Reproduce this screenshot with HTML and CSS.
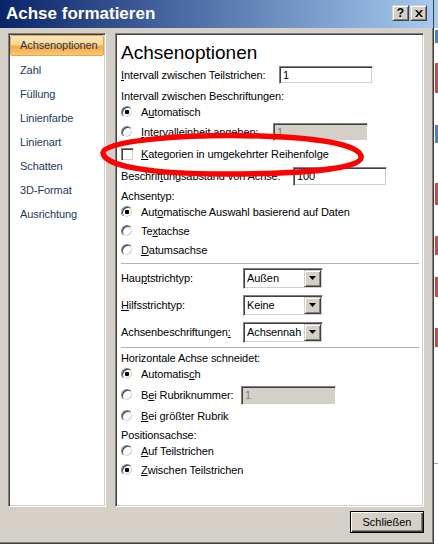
FILE: index.html
```html
<!DOCTYPE html>
<html lang="de">
<head>
<meta charset="utf-8">
<title>Achse formatieren</title>
<link rel="stylesheet" href="styles.css">
</head>
<body>
<div class="screen">
  <div class="dialog">
    <div class="titlebar">
      <span class="title">Achse formatieren</span>
      <div class="caption-btns">
        <span class="cbtn">?</span>
        <span class="cbtn"><svg width="8" height="7" viewBox="0 0 8 7"><path d="M0 0h2l2 2.4L6 0h2L5 3.5L8 7H6L4 4.6L2 7H0l3-3.5z" fill="#000"/></svg></span>
      </div>
    </div>
    <div class="main">
      <ul class="nav sunken">
        <li class="nav-item selected"><span class="nav-hl">Achsenoptionen</span></li>
        <li class="nav-item">Zahl</li>
        <li class="nav-item">Füllung</li>
        <li class="nav-item">Linienfarbe</li>
        <li class="nav-item">Linienart</li>
        <li class="nav-item">Schatten</li>
        <li class="nav-item">3D-Format</li>
        <li class="nav-item">Ausrichtung</li>
      </ul>
      <div class="panel sunken">
        <h1 class="heading">Achsenoptionen</h1>

        <div class="row m3"><span class="lbl w158"><u>I</u>ntervall zwischen Teilstrichen:</span><span class="field f94 h18 sunken">1</span></div>
        <div class="row m5"><span>Intervall zwischen Beschriftungen:</span></div>
        <div class="row m0"><span class="radio on"></span><span>A<u>u</u>tomatisch</span></div>
        <div class="row m4"><span class="radio"></span><span class="lbl w132"><u>I</u>ntervalleinheit angeben:</span><span class="field f95 h18 sunken disabled">1</span></div>
        <div class="row m6"><span class="check sunken"></span><span><u>K</u>ategorien in umgekehrter Reihenfolge</span></div>
        <div class="row m6"><span class="lbl w172">Beschrif<u>t</u>ungsabstand von Achse:</span><span class="field f94 h19 sunken">100</span></div>
        <div class="row m4"><span>Achsentyp:</span></div>
        <div class="row m0"><span class="radio on"></span><span>Aut<u>o</u>matische Auswahl basierend auf Daten</span></div>
        <div class="row m3"><span class="radio"></span><span>Te<u>x</u>tachse</span></div>
        <div class="row m3"><span class="radio"></span><span><u>D</u>atumsachse</span></div>
        <div class="sep m5"></div>
        <div class="row m6"><span class="lbl w122">Hau<u>p</u>tstrichtyp:</span><span class="select sunken"><span class="select-val">Außen</span><span class="select-btn"><svg width="7" height="4" viewBox="0 0 7 4"><path d="M0 0h7L3.5 4z" fill="#000"/></svg></span></span></div>
        <div class="row m11"><span class="lbl w122"><u>H</u>ilfsstrichtyp:</span><span class="select sunken"><span class="select-val">Keine</span><span class="select-btn"><svg width="7" height="4" viewBox="0 0 7 4"><path d="M0 0h7L3.5 4z" fill="#000"/></svg></span></span></div>
        <div class="row m11"><span class="lbl w122">Achsenbeschriftungen<u>:</u></span><span class="select sunken"><span class="select-val">Achsennah</span><span class="select-btn"><svg width="7" height="4" viewBox="0 0 7 4"><path d="M0 0h7L3.5 4z" fill="#000"/></svg></span></span></div>
        <div class="sep m7"></div>
        <div class="row m2"><span>Horizontale Achse schneidet:</span></div>
        <div class="row m0"><span class="radio on"></span><span>Automatis<u>c</u>h</span></div>
        <div class="row m5"><span class="radio"></span><span class="lbl w100">B<u>e</u>i Rubriknummer:</span><span class="field f95 h19 sunken disabled">1</span></div>
        <div class="row m5"><span class="radio"></span><span><u>B</u>ei größter Rubrik</span></div>
        <div class="row m3"><span>Positionsachse:</span></div>
        <div class="row m0"><span class="radio"></span><span><u>A</u>uf Teilstrichen</span></div>
        <div class="row m3"><span class="radio on"></span><span><u>Z</u>wischen Teilstrichen</span></div>
      </div>
    </div>
    <div class="footer">
      <button class="btn" type="button">Schließen</button>
    </div>
  </div>
  <div class="sheet"></div>
</div>
<svg class="annot" width="438" height="544" viewBox="0 0 438 544">
  <path d="M103 153 C102 140 190 134 260 136 C330 138 363 147 361 158 C359 169 300 174 225 174 C150 174 104 166 103 153 Z" fill="none" stroke="#f00" stroke-width="5.5"/>
</svg>
</body>
</html>
```

FILE: styles.css
```css
* {
  box-sizing: border-box;
  margin: 0;
  padding: 0;
}

body {
  margin: 0;
  width: 438px;
  height: 544px;
  overflow: hidden;
  background: #fff;
  font-family: "Liberation Sans", Arial, sans-serif;
  font-size: 11px;
  letter-spacing: -0.1px;
  color: #000;
}

.screen {
  display: flex;
  width: 438px;
  height: 544px;
}

.dialog {
  width: 434px;
  height: 544px;
  flex: none;
  display: flex;
  flex-direction: column;
  background: #d4d0c8;
  border-right: 1px solid #404040;
  border-bottom: 1px solid #404040;
  box-shadow: inset -1px -1px 0 #808080;
}

.titlebar {
  height: 28px;
  flex: none;
  display: flex;
  align-items: center;
  padding: 0 6px 0 6px;
  background: linear-gradient(to right, #0a246a, #a6caf0);
}

.title {
  color: #fff;
  font-weight: bold;
  font-size: 17px;
  letter-spacing: 0;
  padding-bottom: 1px;
}

.caption-btns {
  margin-left: auto;
  display: flex;
  gap: 1px;
  margin-bottom: 2px;
}

.cbtn {
  width: 17px;
  height: 16px;
  display: flex;
  align-items: center;
  justify-content: center;
  background: #d4d0c8;
  border: 1px solid;
  border-color: #d4d0c8 #404040 #404040 #d4d0c8;
  box-shadow: inset 1px 1px 0 #fff, inset -1px -1px 0 #808080;
  font-weight: bold;
  font-size: 12px;
  line-height: 1;
  letter-spacing: 0;
}

.main {
  display: flex;
  gap: 9px;
  padding: 5px 9px 0 8px;
}

.sunken {
  border: 1px solid;
  border-color: #808080 #fff #fff #808080;
  box-shadow: inset 1px 1px 0 #404040, inset -1px -1px 0 #d4d0c8;
}

.nav {
  list-style: none;
  width: 98px;
  height: 474px;
  flex: none;
  background: #fff;
  padding: 1px;
}

.nav-item {
  height: 24px;
  line-height: 22px;
  padding-left: 10px;
  color: #223a5e;
}

.nav-item.selected {
  padding-left: 0;
}

.nav-hl {
  display: block;
  height: 21px;
  line-height: 19px;
  padding-left: 9px;
  border: 1px solid #e3a752;
  border-radius: 2px;
  background: linear-gradient(#fee7be 0%, #fcd690 45%, #f8aa48 55%, #fac572 100%);
}

.panel {
  width: 309px;
  height: 474px;
  flex: none;
  background: #fff;
  padding: 8px 2px 0 5px;
}

.heading {
  font-size: 19px;
  font-weight: normal;
  line-height: 22px;
  height: 22px;
  letter-spacing: 0;
}

.row {
  display: flex;
  align-items: center;
  height: 16px;
  white-space: nowrap;
}

.m0 { margin-top: 0; }
.m2 { margin-top: 2px; }
.m3 { margin-top: 3px; }
.m4 { margin-top: 4px; }
.m5 { margin-top: 5px; }
.m6 { margin-top: 6px; }
.m7 { margin-top: 7px; }
.m11 { margin-top: 11px; }

.lbl { flex: none; }
.w100 { width: 100px; }
.w122 { width: 122px; }
.w132 { width: 132px; }
.w158 { width: 158px; }
.w172 { width: 172px; }

u {
  text-decoration: underline;
  text-underline-offset: 1px;
}

.radio {
  width: 12px;
  height: 12px;
  flex: none;
  border-radius: 50%;
  background: #fff;
  margin-right: 8px;
  border: 1px solid;
  border-color: #808080 #fff #fff #808080;
  box-shadow: inset 1px 1px 0 #404040, inset -1px -1px 0 #d4d0c8;
}

.radio.on {
  background: radial-gradient(circle, #000 0 2px, #fff 2.6px);
}

.check {
  width: 13px;
  height: 13px;
  flex: none;
  background: #fff;
  margin-right: 7px;
}

.field {
  display: flex;
  align-items: center;
  flex: none;
  background: #fff;
  padding-left: 3px;
}

.f94 { width: 94px; }
.f95 { width: 95px; }
.h18 { height: 18px; }
.h19 { height: 19px; }

.field.disabled {
  background: #d4d0c8;
  color: #808080;
}

.select {
  display: flex;
  align-items: center;
  width: 80px;
  height: 21px;
  flex: none;
  background: #fff;
  padding: 1px;
}

.select-val {
  flex: 1;
  padding-left: 2px;
}

.select-btn {
  width: 17px;
  height: 17px;
  display: flex;
  align-items: center;
  justify-content: center;
  background: #d4d0c8;
  border: 1px solid;
  border-color: #d4d0c8 #404040 #404040 #d4d0c8;
  box-shadow: inset 1px 1px 0 #fff, inset -1px -1px 0 #808080;
}

.sep {
  height: 1px;
  background: #b4b4b4;
  margin-right: 2px;
}

.footer {
  display: flex;
  justify-content: flex-end;
  padding: 4px 9px 0 0;
}

.btn {
  width: 74px;
  height: 22px;
  font-family: "Liberation Sans", Arial, sans-serif;
  font-size: 11px;
  color: #000;
  background: #d4d0c8;
  border: 1px solid #000;
  box-shadow: inset 1px 1px 0 #fff, inset -1px -1px 0 #404040, inset -2px -2px 0 #808080;
}

.sheet {
  flex: 1;
  height: 544px;
  background:
    linear-gradient(#a6caf0, #a6caf0) 0 0 / 100% 28px no-repeat,
    linear-gradient(#4f81bd, #4f81bd) 1px 30px / 100% 13px no-repeat,
    linear-gradient(#c0504d, #c0504d) 1px 63px / 100% 30px no-repeat,
    linear-gradient(#4f81bd, #4f81bd) 1px 125px / 100% 18px no-repeat,
    linear-gradient(#c0504d, #c0504d) 1px 183px / 100% 22px no-repeat,
    linear-gradient(#c0504d, #c0504d) 1px 236px / 100% 19px no-repeat,
    linear-gradient(#c0504d, #c0504d) 1px 277px / 100% 20px no-repeat,
    linear-gradient(#c0504d, #c0504d) 1px 328px / 100% 19px no-repeat,
    linear-gradient(#a0a0a0, #a0a0a0) 0 463px / 100% 1px no-repeat,
    #fff;
}

.annot {
  position: absolute;
  left: 0;
  top: 0;
  pointer-events: none;
}
```
